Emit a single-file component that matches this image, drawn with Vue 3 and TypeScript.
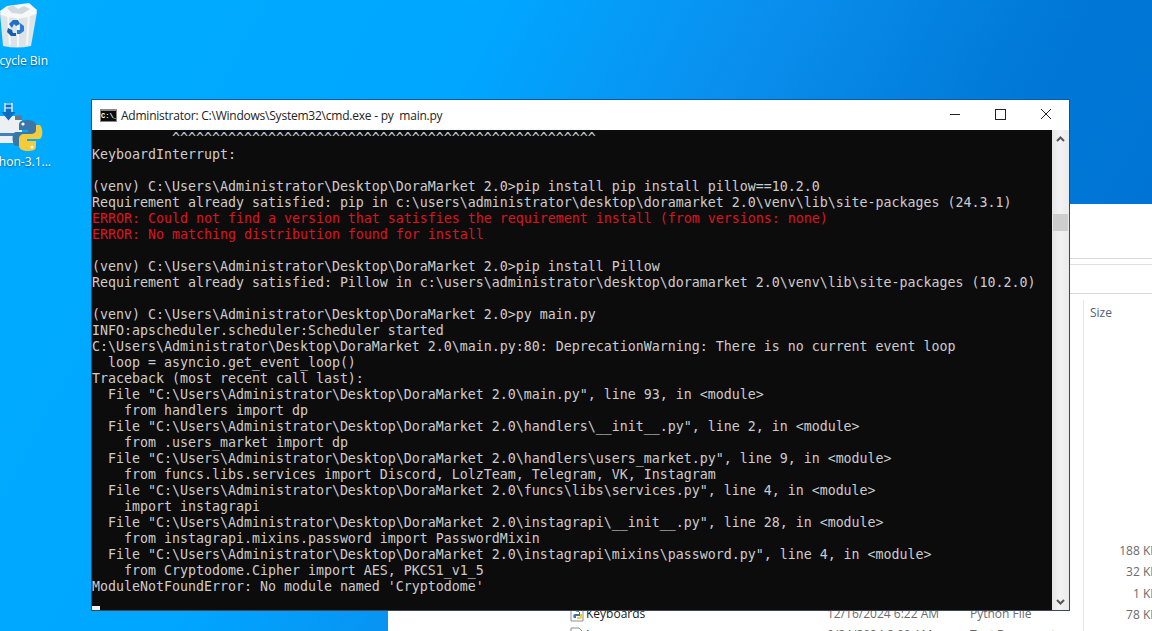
<script setup lang="ts">
interface Line { t: string; red?: boolean }
const root = 'C:\\Users\\Administrator\\Desktop\\DoraMarket 2.0'
const lines: Line[] = [
  { t: ' '.repeat(10) + '^'.repeat(53) },
  { t: 'KeyboardInterrupt:' },
  { t: '' },
  { t: `(venv) ${root}>pip install pip install pillow==10.2.0` },
  { t: 'Requirement already satisfied: pip in c:\\users\\administrator\\desktop\\doramarket 2.0\\venv\\lib\\site-packages (24.3.1)' },
  { t: 'ERROR: Could not find a version that satisfies the requirement install (from versions: none)', red: true },
  { t: 'ERROR: No matching distribution found for install', red: true },
  { t: '' },
  { t: `(venv) ${root}>pip install Pillow` },
  { t: 'Requirement already satisfied: Pillow in c:\\users\\administrator\\desktop\\doramarket 2.0\\venv\\lib\\site-packages (10.2.0)' },
  { t: '' },
  { t: `(venv) ${root}>py main.py` },
  { t: 'INFO:apscheduler.scheduler:Scheduler started' },
  { t: `${root}\\main.py:80: DeprecationWarning: There is no current event loop` },
  { t: '  loop = asyncio.get_event_loop()' },
  { t: 'Traceback (most recent call last):' },
  { t: `  File "${root}\\main.py", line 93, in <module>` },
  { t: '    from handlers import dp' },
  { t: `  File "${root}\\handlers\\__init__.py", line 2, in <module>` },
  { t: '    from .users_market import dp' },
  { t: `  File "${root}\\handlers\\users_market.py", line 9, in <module>` },
  { t: '    from funcs.libs.services import Discord, LolzTeam, Telegram, VK, Instagram' },
  { t: `  File "${root}\\funcs\\libs\\services.py", line 4, in <module>` },
  { t: '    import instagrapi' },
  { t: `  File "${root}\\instagrapi\\__init__.py", line 28, in <module>` },
  { t: '    from instagrapi.mixins.password import PasswordMixin' },
  { t: `  File "${root}\\instagrapi\\mixins\\password.py", line 4, in <module>` },
  { t: '    from Cryptodome.Cipher import AES, PKCS1_v1_5' },
  { t: "ModuleNotFoundError: No module named 'Cryptodome'" },
]
const sizes = ['188 KB', '32 KB', '1 KB', '78 KB']
</script>

<template>
  <div class="desktop">
    <div class="desk-icon bin">
      <svg width="40" height="50" viewBox="0 0 40 50">
        <path d="M0 13 L3 46 Q17 49 31 46 L37 12 Z" fill="#dde4e8" />
        <path d="M8 14 L10 45 M18 16 L18 47 M29 14 L27 45" stroke="#f4f6f7" stroke-width="2" fill="none" />
        <path d="M0 11 L7 6 L29 3 L37 10 L36 14 Q18 22 1 15 Z" fill="#f6f8f9" />
        <path d="M7 8 L13 5 L18 9 L24 6 L30 9 L22 14 L12 13 Z" fill="#cfd8dd" />
        <path d="M9 24 L13 20 L18 20 L20 24 L16 26 L14 24 L12 28 Z" fill="#1f6fc9" />
        <path d="M20 23 L24 26 L24 31 L20 34 L17 34 L17 30 L20 30 Z" fill="#2a7dd6" />
        <path d="M8 28 L12 30 L13 33 L16 33 L16 36 L11 36 L7 32 Z" fill="#165dae" />
      </svg>
      <span class="label">Recycle Bin</span>
    </div>
    <div class="desk-icon py">
      <svg width="44" height="52" viewBox="0 0 44 52">
        <path d="M-4 16 H22 V43 H-4 Z" fill="#edf0f2" />
        <path d="M15 15.5 H22 V20 H15 Z" fill="#6c7680" />
        <path d="M-4 33 H18 V36 H-4 Z" fill="#3f84b8" />
        <path d="M5 3 H12 V12 H15.5 L8.5 20.5 L1.5 12 H5 Z" fill="#0f6cc0" />
        <path d="M5 3 V12 M12 3 V12 M5 4 H12 M5 8 H12" stroke="#fff" stroke-width="1.2" fill="none" />
        <path d="M27 20 C19 20 19 23 19 26 V30 H28 V32 H16 C11 32 12 46 16 46 H19 V41 C19 38 22 37 24 37 H32 C35 37 36 35 36 32 V25 C36 22 32 20 27 20 Z" fill="#3a76a8" />
        <path d="M28 51 C36 51 36 48 36 45 V41 H27 V39 H39 C44 39 43 25 39 25 H36 V30 C36 33 33 34 31 34 H24 C21 34 19 36 19 39 V46 C19 49 23 51 28 51 Z" fill="#f4cb3b" />
        <circle cx="23" cy="24" r="1.6" fill="#fff" />
        <circle cx="32" cy="47" r="1.6" fill="#fff" />
      </svg>
      <span class="label">Python-3.1...</span>
    </div>

    <section class="explorer">
      <div class="rule first"></div>
      <div class="rule second"></div>
      <div class="rule third"></div>
      <div class="col-sep"></div>
      <span class="col-size">Size</span>
      <div class="size-list">
        <span v-for="s in sizes" :key="s">{{ s }}</span>
      </div>
      <div class="file-row">
        <svg class="py-file" width="14" height="16" viewBox="0 0 14 16">
          <path d="M1 1 H9 L13 5 V15 H1 Z" fill="#fff" stroke="#8a8f94" />
          <path d="M5 5 H9 V8 H5 C3 8 3 11 4 12 H6 V10 H10 V6" fill="#3a76a8" />
          <path d="M7 13 H10 C12 13 13 10 12 8 H10 V11 H7 Z" fill="#f4cb3b" />
        </svg>
        <span class="name">Keyboards</span>
        <span class="date">12/16/2024 6:22 AM</span>
        <span class="type">Python File</span>
      </div>
      <div class="file-row next">
        <svg width="14" height="16" viewBox="0 0 14 16" class="py-file">
          <path d="M1 1 H9 L13 5 V15 H1 Z" fill="#fff" stroke="#8a8f94" />
        </svg>
        <span class="name">Logs</span>
        <span class="date">9/24/2024 8:00 AM</span>
        <span class="type">Text Document</span>
      </div>
    </section>

    <section class="cmd">
      <header class="titlebar">
        <span class="cmd-icon">C:\_</span>
        <span class="title">Administrator: C:\Windows\System32\cmd.exe - py&nbsp; main.py</span>
        <svg class="controls" width="102" height="30" viewBox="0 0 102 30">
          <path d="M0 14.5 H10" stroke="#222" fill="none" />
          <rect x="45.5" y="9.5" width="10" height="10" stroke="#222" fill="none" />
          <path d="M91 9 L101 19 M101 9 L91 19" stroke="#222" fill="none" />
        </svg>
      </header>
      <div class="body">
        <div class="console">
          <div v-for="(l, i) in lines" :key="i" class="line" :class="{ red: l.red }">{{ l.t }}</div>
          <div class="line"><span class="cursor"></span></div>
        </div>
        <div class="scrollbar">
          <svg width="17" height="17" viewBox="0 0 17 17"><path d="M5 11 L8.5 7.5 L12 11" fill="none" stroke="#555" stroke-width="2" /></svg>
          <div class="track"><div class="thumb"></div></div>
          <svg width="17" height="17" viewBox="0 0 17 17"><path d="M5 7 L8.5 10.5 L12 7" fill="none" stroke="#555" stroke-width="2" /></svg>
        </div>
      </div>
    </section>
  </div>
</template>

<style>
html, body { margin: 0; overflow: hidden; }
</style>

<style scoped>
.desktop {
  position: relative;
  width: 1152px;
  height: 631px;
  overflow: hidden;
  background: linear-gradient(118deg, #00adff 0%, #00a6ff 34%, #0a8fee 52%, #0078d7 72%, #0070d0 100%);
  font-family: "Open Sans", "Noto Sans", sans-serif;
}
.desk-icon { position: absolute; }
.desk-icon .label {
  position: absolute;
  white-space: nowrap;
  color: #fff;
  font-size: 12px;
  line-height: 16px;
  text-shadow: 0 1px 2px rgba(0, 0, 0, .55);
}
.bin { left: 0; top: 0; width: 40px; height: 70px; }
.bin .label { right: -8px; top: 53px; }
.py { left: 0; top: 100px; width: 44px; height: 70px; }
.py .label { right: -7px; top: 54px; }

.explorer {
  position: absolute;
  left: 388px; right: 0; top: 204px; bottom: 0;
  background: #fff;
  font-size: 12px;
  color: #5e6b7a;
}
.rule { position: absolute; left: 682px; right: 0; height: 1px; background: #d9d9d9; }
.first { top: 54px; }
.second { top: 60px; background: #e0e0e0; }
.third { top: 89px; }
.col-sep { position: absolute; left: 695px; top: 96px; bottom: 0; width: 1px; background: #e8e8e8; }
.col-size { position: absolute; left: 702px; top: 101px; color: #51607a; line-height: 16px; }
.size-list {
  position: absolute;
  right: -6px; top: 339px;
  display: flex; flex-direction: column; align-items: flex-end; row-gap: 5px;
  color: #6b6b6b; line-height: 16.3px;
}
.file-row {
  position: absolute; left: 182px; top: 402px; right: 0; height: 16px;
  display: flex; align-items: center; line-height: 16px; white-space: nowrap;
}
.file-row.next { top: 423px; }
.py-file { flex: none; margin-right: 2px; }
.name { width: 241px; margin-left: 0; color: #1a1a1a; }
.date { width: 143px; color: #6b6b6b; }
.type { color: #6b6b6b; }

.cmd {
  position: absolute;
  left: 91px; top: 99px;
  width: 977px;
  border: 1px solid #3b4754;
  border-top-color: #0d5da6;
  display: flex; flex-direction: column;
  background: #fff;
}
.titlebar {
  height: 30px; position: relative;
  display: flex; align-items: center;
  color: #222; font-size: 12px;
}
.cmd-icon {
  width: 15px; height: 10px; margin-left: 8px; margin-right: 4px;
  background: #0c0c0c; border: 1px solid #888; border-top-width: 2px;
  color: #fff; font: bold 7px/10px "Liberation Mono", monospace; overflow: hidden; white-space: nowrap;
}
.title { white-space: nowrap; letter-spacing: -.23px; }
.controls { position: absolute; right: 17px; top: 0; }
.body { display: flex; height: 480px; }
.console {
  width: 960px; height: 480px; flex: none; box-sizing: border-box; padding-top: 1px;
  background: #0c0c0c; color: #cccccc;
  font-family: "DejaVu Sans Mono", monospace;
  font-size: 13.29px; line-height: 16px;
  overflow: hidden;
}
.line { height: 16px; white-space: pre; position: relative; }
.red { color: #dc1420; }
.cursor { position: absolute; left: 0; bottom: 1px; width: 8px; height: 4px; background: #f2f2f2; }
.scrollbar {
  width: 17px;
  background: linear-gradient(90deg, #e6e6e6, #f2f2f2 45%, #eaeaea);
  display: flex; flex-direction: column;
}
.track { flex: 1; position: relative; }
.thumb { position: absolute; left: 1px; right: 1px; top: 67px; height: 17px; background: #cdcdcd; }
</style>
